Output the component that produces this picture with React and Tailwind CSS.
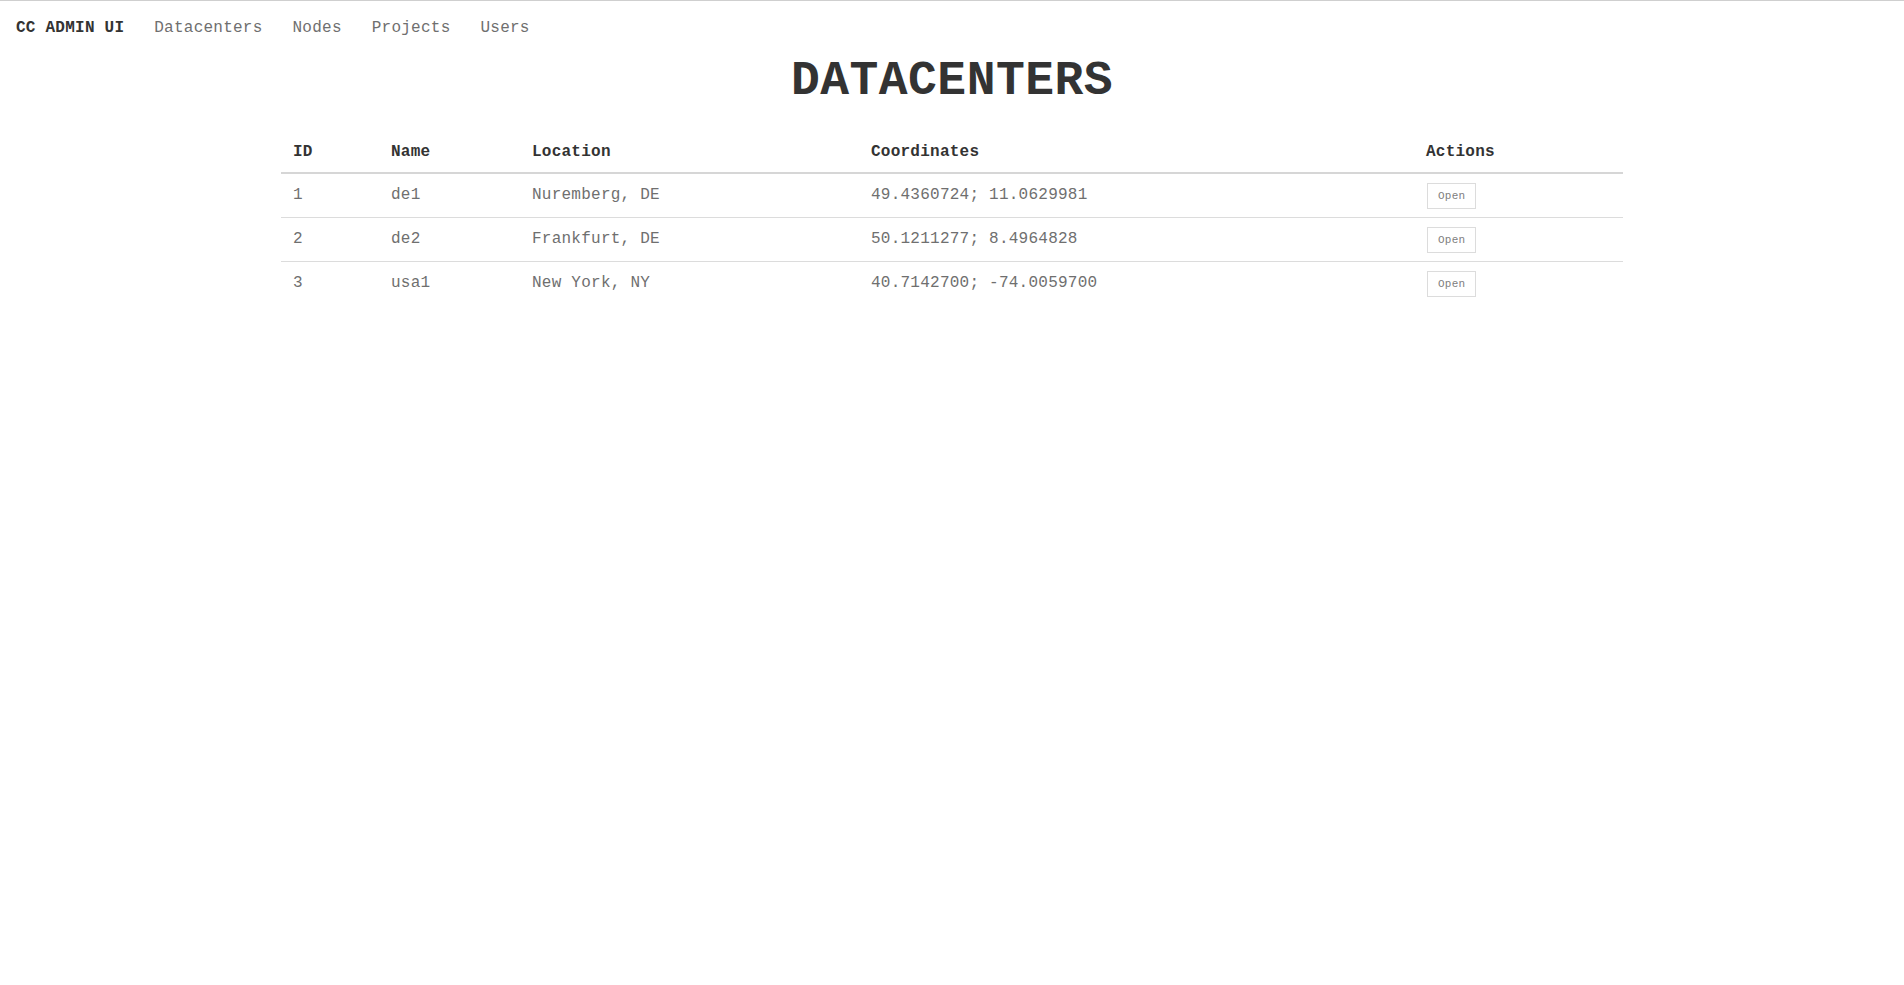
const datacenters = [
  { id: 1, name: 'de1', location: 'Nuremberg, DE', coords: '49.4360724; 11.0629981' },
  { id: 2, name: 'de2', location: 'Frankfurt, DE', coords: '50.1211277; 8.4964828' },
  { id: 3, name: 'usa1', location: 'New York, NY', coords: '40.7142700; -74.0059700' },
];

const links = ['Datacenters', 'Nodes', 'Projects', 'Users'];

function Nav() {
  return (
    <nav className="flex items-center gap-[30px] px-[16px] pt-[14px] h-[40px] text-[16px] leading-[24px]">
      <span className="font-bold text-[#333]">CC ADMIN UI</span>
      {links.map((l) => (
        <a key={l} href="#" className="text-[#6f6f6f]">
          {l}
        </a>
      ))}
    </nav>
  );
}

function DatacenterTable() {
  return (
    <table className="w-[1342px] mx-auto border-collapse text-[16px] leading-[20px]">
      <thead>
        <tr className="border-b-2 border-[#d6d6d6]">
          <th className="w-[98px] h-[42px] px-3 text-left font-bold text-[#333]">ID</th>
          <th className="w-[141px] px-3 text-left font-bold text-[#333]">Name</th>
          <th className="w-[339px] px-3 text-left font-bold text-[#333]">Location</th>
          <th className="w-[555px] px-3 text-left font-bold text-[#333]">Coordinates</th>
          <th className="px-3 text-left font-bold text-[#333]">Actions</th>
        </tr>
      </thead>
      <tbody>
        {datacenters.map((dc, i) => (
          <tr
            key={dc.id}
            className={i < datacenters.length - 1 ? 'border-b border-[#dcdcdc]' : ''}
          >
            <td className="h-[44px] px-3 text-[#6f6f6f]">{dc.id}</td>
            <td className="px-3 text-[#6f6f6f]">{dc.name}</td>
            <td className="px-3 text-[#6f6f6f]">{dc.location}</td>
            <td className="px-3 text-[#6f6f6f]">{dc.coords}</td>
            <td className="px-3">
              <button className="mt-[2px] ml-[1px] border border-[#dcdcdc] bg-white px-[10px] py-[5px] text-[11px] leading-[14px] text-[#808080]">
                Open
              </button>
            </td>
          </tr>
        ))}
      </tbody>
    </table>
  );
}

export default function App() {
  return (
    <div
      className="min-h-screen bg-white border-t border-[#cfcfcf] tracking-[0.015em]"
      style={{ fontFamily: '"Liberation Mono", "DejaVu Sans Mono", monospace' }}
    >
      <Nav />
      <h1 className="text-center text-[48px] leading-[56px] font-bold tracking-[0.01em] text-[#333] mt-[12px] mb-[22px]">
        DATACENTERS
      </h1>
      <DatacenterTable />
    </div>
  );
}
